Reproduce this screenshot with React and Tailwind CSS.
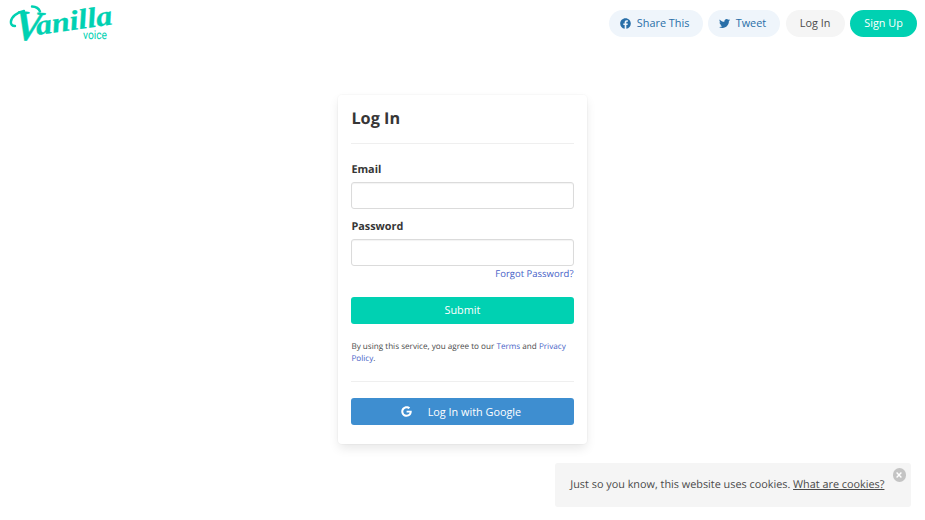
import { FaFacebook, FaTwitter, FaGoogle } from "react-icons/fa";

function Logo() {
  return (
    <svg width="112" height="46" viewBox="0 0 112 46" className="ml-[6px] shrink-0 overflow-visible" fill="#00d1b2">
      <g fontFamily="'Liberation Serif', serif" fontStyle="italic" fontWeight="700" stroke="#00d1b2">
        <text x="8" y="40" fontSize="43" strokeWidth="0.4" textLength="27" lengthAdjust="spacingAndGlyphs" transform="rotate(4 18 40)">
          V
        </text>
        <text x="31" y="35" fontSize="28" strokeWidth="0.3" textLength="77" lengthAdjust="spacingAndGlyphs" transform="rotate(-8 31 35)">
          anilla
        </text>
      </g>
      {/* swashes around the initial */}
      <g fill="none" stroke="#00d1b2" strokeLinecap="round">
        <path d="M9 26C3 26 4 19 9 15c3-2.300 6-3.500 9-4" strokeWidth="2.400" />
        <path d="M26 6.500c4 .2 7 2.500 8 5" strokeWidth="2.400" />
      </g>
      <text x="77" y="39" fontSize="12" fontFamily="Roboto, sans-serif" textLength="24" lengthAdjust="spacingAndGlyphs">
        voice
      </text>
    </svg>
  );
}

function Navbar() {
  return (
    <nav className="flex h-[46px] items-center justify-between pr-[8px]">
      <Logo />
      <div className="flex items-center gap-[5.4px]">
        <button className="flex h-[27px] w-[93.5px] items-center rounded-full bg-[#eff5fb] pl-[11px] text-[#296fa8]">
          <FaFacebook size={11} />
          <span className="ml-[5.5px]">Share This</span>
        </button>
        <button className="flex h-[27px] w-[72px] items-center rounded-full bg-[#eff5fb] pl-[11px] text-[#296fa8]">
          <FaTwitter size={11} />
          <span className="ml-[5.5px]">Tweet</span>
        </button>
        <button className="h-[27px] w-[59px] rounded-full bg-[#f5f5f5]">Log In</button>
        <button className="h-[27px] w-[67px] rounded-full bg-[#00d1b2] text-white">Sign Up</button>
      </div>
    </nav>
  );
}

function Field({ label, type }) {
  return (
    <label className="block">
      <span className="block h-[16px] leading-[17px] font-bold text-[#363636]">{label}</span>
      <input
        type={type}
        className="mt-[5px] block h-[27px] w-full rounded-[3px] border border-[#dbdbdb] bg-white px-2 shadow-[inset_0_1px_1px_rgba(10,10,10,0.05)] outline-none"
      />
    </label>
  );
}

function LoginCard() {
  return (
    <form className="mx-auto mt-[49px] h-[349px] w-[249px] rounded-[4px] bg-white pr-[13.5px] pl-[13.4px] pt-[13px] shadow-[0_5px_11px_-1px_rgba(10,10,10,0.1),0_0_0_1px_rgba(10,10,10,0.02)]">
      <h1 className="h-[20px] text-[16.25px] leading-[20px] font-bold text-[#363636]">Log In</h1>
      <hr className="mt-[15px] mb-[17px] border-[#efefef]" />
      <Field label="Email" type="email" />
      <div className="mt-[9px]">
        <Field label="Password" type="password" />
      </div>
      <a className="block h-[15px] text-right text-[9.5px] leading-[15px] text-[#485fc7]">Forgot Password?</a>
      <button type="button" className="mt-[15.5px] block h-[27px] w-full rounded-[3px] bg-[#00d1b2] text-white">
        Submit
      </button>
      <p className="mt-[17.2px] text-[8.13px] leading-[12.2px]">
        By using this service, you agree to our <a className="text-[#485fc7]">Terms</a> and{" "}
        <a className="text-[#485fc7]">Privacy Policy</a>.
      </p>
      <hr className="mt-[16px] mb-[16.3px] border-[#efefef]" />
      <button
        type="button"
        className="flex h-[27px] w-full items-center justify-center rounded-[3px] bg-[#3e8ed0] pr-[3px] text-white"
      >
        <FaGoogle size={11} />
        <span className="ml-[16px]">Log In with Google</span>
      </button>
    </form>
  );
}

function CookieNotice() {
  return (
    <div className="fixed right-[14px] bottom-[13.5px] flex h-[44px] w-[356.5px] items-center rounded-[3px] bg-[#f5f5f5] pt-[2px] pl-[15.8px]">
      <p className="whitespace-nowrap">
        Just so you know, this website uses cookies. <a className="underline">What are cookies?</a>
      </p>
      <button
        aria-label="Close"
        className="absolute top-[5.5px] right-[5px] flex size-[13.5px] items-center justify-center rounded-full bg-[#c4c4c4]"
      >
        <svg width="6" height="6" viewBox="0 0 6 6" stroke="#fff" strokeWidth="1.4">
          <path d="M.6.6l4.8 4.8M5.4.6L.6 5.4" />
        </svg>
      </button>
    </div>
  );
}

export default function App() {
  return (
    <div className="h-[520px] overflow-hidden bg-white font-['Open_Sans',sans-serif] text-[10.85px] leading-[16.25px] text-[#4a4a4a] [text-rendering:geometricPrecision]">
      <Navbar />
      <LoginCard />
      <CookieNotice />
    </div>
  );
}
